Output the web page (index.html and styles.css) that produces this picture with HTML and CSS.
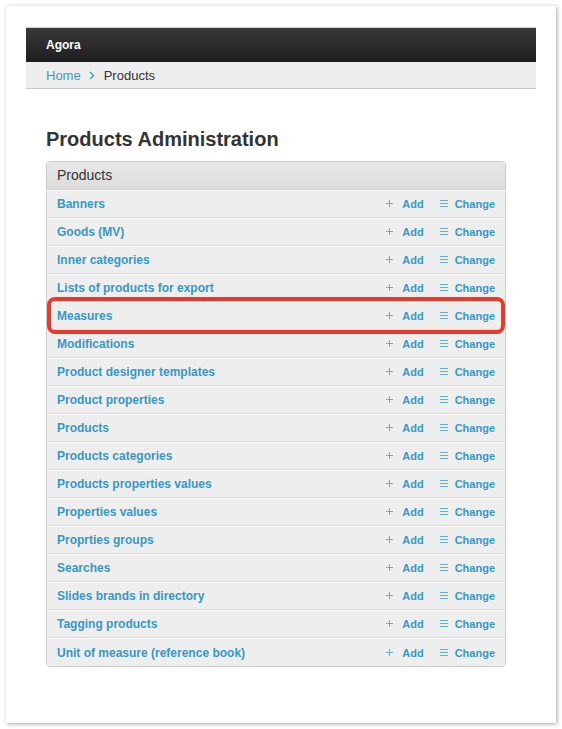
FILE: index.html
```html
<!DOCTYPE html>
<html>
<head>
<meta charset="utf-8">
<link rel="stylesheet" href="styles.css">
</head>
<body>
<div class="card">
  <div class="topbar">Agora</div>
  <div class="crumbs">
    <a class="crumb-link" href="#">Home</a>
    <svg class="chev" width="6" height="9" viewBox="0 0 6 9"><path d="M1 1 L4.5 4.5 L1 8" fill="none" stroke="#3a9ccb" stroke-width="1.4"/></svg>
    <span class="crumb-current">Products</span>
  </div>
  <div class="content">
    <h1 class="title">Products Administration</h1>
    <div class="module">
      <div class="module-head">Products</div>
      <div class="rows" id="rows"></div>
    </div>
  </div>
</div>
<script>
var items = ["Banners","Goods (MV)","Inner categories","Lists of products for export","Measures","Modifications","Product designer templates","Product properties","Products","Products categories","Products properties values","Properties values","Proprties groups","Searches","Slides brands in directory","Tagging products","Unit of measure (reference book)"];
var plus = '<svg class="ico" width="8" height="8" viewBox="0 0 8 8"><path d="M3.5 0 V7 M0 3.5 H7" stroke="#5fb1d6" stroke-width="1"/></svg>';
var menu = '<svg class="ico" width="8" height="8" viewBox="0 0 8 8"><path d="M0 0.5 H8 M0 3.5 H8 M0 6.5 H8" stroke="#5fb1d6" stroke-width="1"/></svg>';
var html = "";
items.forEach(function(t){
  var hl = t === "Measures" ? " row-hl" : "";
  html += '<div class="row' + hl + '"><a class="name" href="#">' + t + '</a>' +
    '<span class="actions"><a class="act" href="#">' + plus + '<span>Add</span></a>' +
    '<a class="act" href="#">' + menu + '<span>Change</span></a></span></div>';
});
document.getElementById("rows").innerHTML = html;
</script>
</body>
</html>
```
FILE: styles.css
```css
html, body {
  margin: 0;
  padding: 0;
  background: #fff;
}
body {
  font-family: "Liberation Sans", Arial, sans-serif;
  padding: 6px;
}
.card {
  width: 510px;
  height: 696px;
  padding: 21px 20px 0 20px;
  background: #fff;
  box-shadow: 1px 1px 4px rgba(0,0,0,0.35);
}
.topbar {
  height: 34px;
  border-top: 1px solid #cfcfcf;
  background: linear-gradient(#393939, #1e1e1e);
  color: #fff;
  font-weight: bold;
  font-size: 12px;
  line-height: 34px;
  padding-left: 20px;
}
.crumbs {
  height: 26px;
  background: #eeeeee;
  border-bottom: 1px solid #c9c9c9;
  display: flex;
  align-items: center;
  padding-left: 20px;
  font-size: 13px;
}
.crumb-link {
  color: #3a9ccb;
  text-decoration: none;
}
.chev {
  margin: 0 9px 0 8px;
}
.crumb-current {
  color: #333;
}
.content {
  padding: 38px 30px 0 20px;
}
.title {
  margin: 0 0 10px 0;
  font-size: 20px;
  line-height: 24px;
  font-weight: bold;
  color: #333;
}
.module {
  border: 1px solid #cccccc;
  border-radius: 4px;
}
.module-head {
  height: 27px;
  line-height: 27px;
  border-bottom: 1px solid #d4d4d4;
  background: linear-gradient(#e8e8e8, #dcdcdc);
  border-radius: 3px 3px 0 0;
  padding-left: 10px;
  font-size: 14px;
  color: #333;
}
.row {
  position: relative;
  height: 26px;
  border-top: 1px solid #fbfbfb;
  border-bottom: 1px solid #dadada;
  background: #eeeeee;
  display: flex;
  align-items: center;
  justify-content: space-between;
  padding: 0 10px;
  font-size: 12px;
  font-weight: bold;
}
.row:last-child {
  border-bottom: none;
  height: 27px;
  border-radius: 0 0 3px 3px;
}
.row a {
  color: #3598c7;
  text-decoration: none;
}
.actions {
  display: flex;
  align-items: center;
  gap: 16px;
  font-size: 11px;
}
.act {
  display: flex;
  align-items: center;
  gap: 8px;
}
.act + .act {
  gap: 7px;
}
.ico {
  display: block;
}
.row-hl {
  z-index: 2;
}
.row-hl::after {
  content: "";
  position: absolute;
  left: 0;
  right: 0;
  top: -6px;
  bottom: -5px;
  border: 4px solid #e33b2e;
  border-radius: 8px;
  pointer-events: none;
}
```
